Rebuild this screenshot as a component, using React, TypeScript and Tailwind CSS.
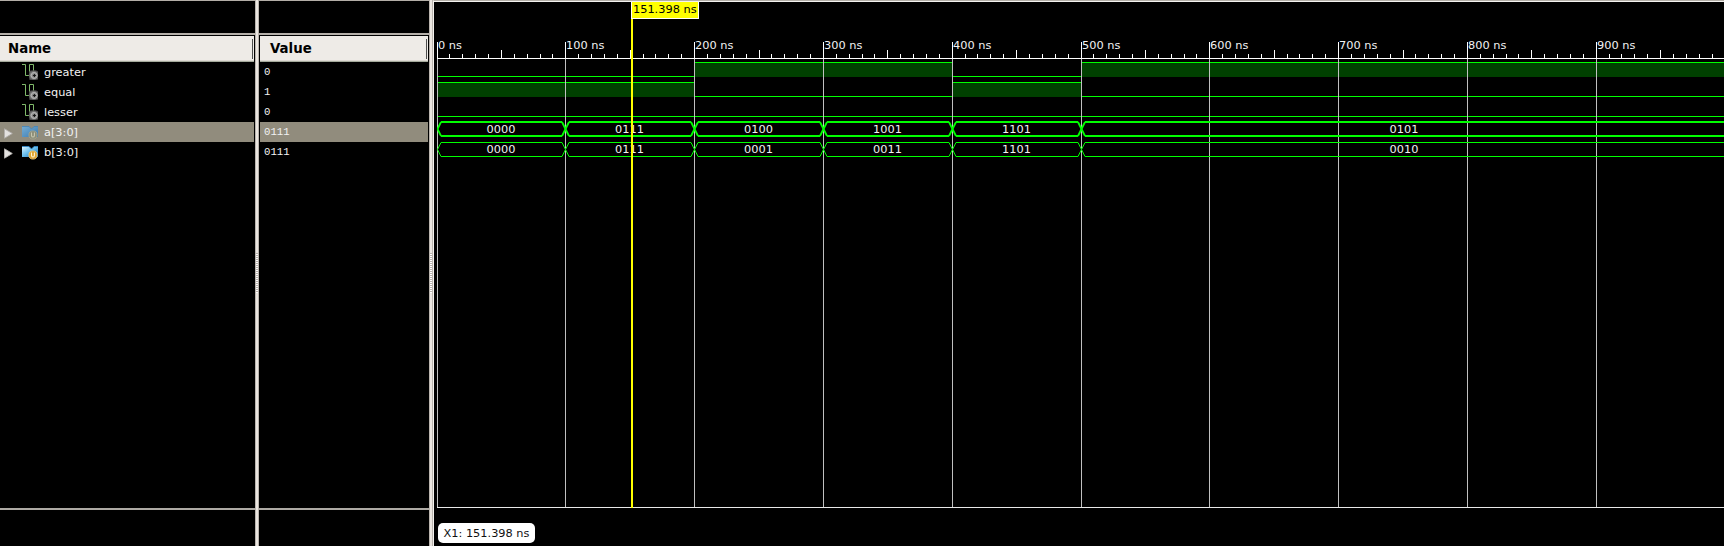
import React from "react";

const STEP = 128.8;
const PLOT_W = 1287;
const at = (ns: number) => Math.floor((ns * STEP) / 100 + 0.001);

type Span = { from: number; to: number; value: string };
type Signal = { name: string; value: string; bus: boolean; selected?: boolean; spans: Span[] };

const signals: Signal[] = [
  {
    name: "greater", value: "0", bus: false,
    spans: [
      { from: 0, to: 200, value: "0" },
      { from: 200, to: 400, value: "1" },
      { from: 400, to: 500, value: "0" },
      { from: 500, to: 1000, value: "1" },
    ],
  },
  {
    name: "equal", value: "1", bus: false,
    spans: [
      { from: 0, to: 200, value: "1" },
      { from: 200, to: 400, value: "0" },
      { from: 400, to: 500, value: "1" },
      { from: 500, to: 1000, value: "0" },
    ],
  },
  { name: "lesser", value: "0", bus: false, spans: [{ from: 0, to: 1000, value: "0" }] },
  {
    name: "a[3:0]", value: "0111", bus: true, selected: true,
    spans: [
      { from: 0, to: 100, value: "0000" },
      { from: 100, to: 200, value: "0111" },
      { from: 200, to: 300, value: "0100" },
      { from: 300, to: 400, value: "1001" },
      { from: 400, to: 500, value: "1101" },
      { from: 500, to: 1000, value: "0101" },
    ],
  },
  {
    name: "b[3:0]", value: "0111", bus: true,
    spans: [
      { from: 0, to: 100, value: "0000" },
      { from: 100, to: 200, value: "0111" },
      { from: 200, to: 300, value: "0001" },
      { from: 300, to: 400, value: "0011" },
      { from: 400, to: 500, value: "1101" },
      { from: 500, to: 1000, value: "0010" },
    ],
  },
];

function WireIcon() {
  return (
    <svg width="16" height="16" viewBox="0 0 16 16" className="shrink-0">
      <defs>
        <radialGradient id="gear">
          <stop offset="0" stopColor="#c4c4c4" />
          <stop offset="0.55" stopColor="#9a9a9a" />
          <stop offset="1" stopColor="#4a4a4a" />
        </radialGradient>
      </defs>
      <path d="M0 .5H3.5V11.5H7.5V.5H11.5V7" fill="none" stroke="#7fb96a" />
      <rect x="7" y="6.5" width="9" height="9.5" rx="2" fill="#4a4a4a" />
      <circle cx="11.7" cy="11.3" r="4.9" fill="url(#gear)" />
      <path d="M8 7.5l8 8M16 7.5l-8 8" stroke="#6e6e6e" strokeWidth="1" />
      <circle cx="12.2" cy="11.5" r="3" fill="#8e8e8e" stroke="#c4c4c4" strokeWidth=".7" />
      <path d="M12.4 10v3M10.9 11.5h3" stroke="#151515" strokeWidth="1.1" />
    </svg>
  );
}

function BusIcon({ dim }: { dim?: boolean }) {
  return (
    <svg width="16" height="16" viewBox="0 0 16 16" className="shrink-0">
      <defs>
        <linearGradient id="busLit" x1="0" y1="0" x2="1" y2="1">
          <stop offset="0" stopColor="#e2f5fd" />
          <stop offset="0.45" stopColor="#6cc0ee" />
          <stop offset="1" stopColor="#1668b0" />
        </linearGradient>
        <linearGradient id="busDim" x1="0" y1="0" x2="1" y2="1">
          <stop offset="0" stopColor="#76add3" />
          <stop offset="1" stopColor="#3a7ab0" />
        </linearGradient>
      </defs>
      <path
        d="M0 2.5H7L9.5 5 12 2.5H16V13H0Z"
        fill={dim ? "url(#busDim)" : "url(#busLit)"}
      />
      <path d="M0 2.5H7L9.5 5 12 2.5H16" fill="none" stroke={dim ? "#4b86b5" : "#3188c8"} strokeWidth=".9" />
      <circle cx="11" cy="11" r="4.1" fill={dim ? "#8b8d78" : "#dfa32c"} stroke={dim ? "#a3a490" : "#f0cd7c"} strokeWidth=".8" />
      <path d="M9.5 8.6V11.6Q9.7 13 11 13T12.4 11.6V8.6" fill="none" stroke={dim ? "#c7c6b0" : "#fff3d0"} strokeWidth="1.1" />
    </svg>
  );
}

function Expander() {
  return (
    <svg width="9" height="11" viewBox="0 0 9 11" className="mt-[3px] shrink-0">
      <path d="M.5 .8L8.3 5.5L.5 10.2Z" fill="#e4e2e0" stroke="#b3b0ad" strokeWidth=".9" />
    </svg>
  );
}

function PaneHeader({ title, inset }: { title: string; inset: string }) {
  return (
    <div className="flex h-[26px] shrink-0 items-center border-b border-[#a5aa9c] bg-[#eeebe7] shadow-[inset_0_-1px_0_#dcd8d1]">
      <span className={`grow text-[13.33px] leading-none font-bold text-black ${inset}`}>{title}</span>
      <span className="mr-px h-5 w-px bg-[#4d4d4d]" />
    </div>
  );
}

function Pane({ className, title, inset, children }: {
  className: string; title: string; inset: string; children: React.ReactNode;
}) {
  return (
    <section className={`flex shrink-0 flex-col border-t border-[#b3aea7] ${className}`}>
      <div className="h-8 shrink-0" />
      <div className="-mx-px mb-px h-[2px] shrink-0 bg-[#b5b0aa]" />
      <div className="flex grow flex-col">
        <PaneHeader title={title} inset={inset} />
        {children}
      </div>
      <div className="-mx-px h-[2px] shrink-0 bg-[#aeaaa4]" />
      <div className="h-9 shrink-0" />
    </section>
  );
}

function Grip({ className }: { className: string }) {
  return (
    <div className={`flex shrink-0 flex-col items-center justify-center border-x bg-[#ebe6e1] ${className}`}>
      {Array.from({ length: 20 }, (_, i) => (
        <div key={i} className="h-[2px] w-full shrink-0 border-b border-white bg-[#b9b2ac]" />
      ))}
    </div>
  );
}

function Cell({ x0, x1, y, thick, open }: { x0: number; x1: number; y: number; thick: boolean; open: boolean }) {
  const l = x0 + 0.5;
  const r = x1 + 0.5;
  const b = y + 14;
  const m = y + 7;
  const left = `M${l + 3.5} ${y}L${l} ${m}L${l + 3.5} ${b}`;
  const right = `M${r - 3.5} ${y}L${r} ${m}L${r - 3.5} ${b}`;
  const end = open ? x1 : x1 - 3;
  const w = thick ? 2 : 1;
  return (
    <g stroke="#00ff00" fill="none" strokeLinejoin="bevel">
      <path d={`M${x0 + 4} ${y}H${end}M${x0 + 4} ${b}H${end}`} strokeWidth={w} shapeRendering="crispEdges" />
      <path d={open ? left : left + right} strokeWidth={thick ? 1.8 : 1} />
    </g>
  );
}

function Waveform() {
  const majors = Array.from({ length: 10 }, (_, i) => i * 100);
  const ticks = Array.from({ length: 100 }, (_, i) => i * 10);
  return (
    <svg width={PLOT_W} height="506" viewBox={`0 2 ${PLOT_W} 506`} className="block" fontSize="11.33" fill="#f2f2f2">
      {signals.map((s, row) => {
        const top = 62 + row * 20;
        return s.spans.map((p) => {
          const x0 = at(p.from);
          const x1 = at(p.to);
          if (s.bus) return null;
          return p.value === "1" ? (
            <g key={s.name + p.from} shapeRendering="crispEdges">
              <rect x={x0} y={top} width={x1 - x0} height="15" fill="#004000" />
              <rect x={x0} y={top} width={x1 - x0} height="1" fill="#00ff00" />
            </g>
          ) : (
            <rect key={s.name + p.from} x={x0} y={top + 14} width={x1 - x0} height="1" fill="#00ff00" />
          );
        });
      })}
      <g shapeRendering="crispEdges">
        {majors.map((t) => (
          <rect key={t} x={at(t)} y="59" width="1" height="448" fill="#c0c0c0" />
        ))}
        {ticks.map((t) => {
          const h = t % 100 === 0 ? 16 : t % 50 === 0 ? 8 : 4;
          return <rect key={t} x={at(t)} y={58 - h} width="1" height={h} fill="#fff" />;
        })}
        <rect x="0" y="58" width={PLOT_W} height="1" fill="#fff" />
        <rect x="0" y="507" width={PLOT_W} height="1" fill="#e8e8e8" />
      </g>
      {majors.map((t) => (
        <text key={t} x={at(t) + 1} y="49">{t} ns</text>
      ))}
      {signals.map((s, row) =>
        s.bus
          ? s.spans.map((p) => {
              const x0 = at(p.from);
              const x1 = p.to === 1000 ? PLOT_W + 3 : at(p.to);
              const y = 62 + row * 20 + (s.selected ? 0 : 0.5);
              return (
                <g key={s.name + p.from}>
                  <Cell x0={x0} x1={x1} y={y} thick={!!s.selected} open={p.to === 1000} />
                  <text x={(x0 + x1) / 2} y={133 + (row - 3) * 20} textAnchor="middle">{p.value}</text>
                </g>
              );
            })
          : null
      )}
      <rect x="194" y="2" width="2" height="506" fill="#ffff00" shapeRendering="crispEdges" />
    </svg>
  );
}

export default function App() {
  return (
    <main className="flex h-[546px] w-[1724px] overflow-hidden bg-black font-['DejaVu_Sans',sans-serif] text-[11.33px] text-[#f2f2f2]">
      <Pane className="w-[255px] pr-px" title="Name" inset="pl-2">
        {signals.map((s) => (
          <div key={s.name} className={`flex h-5 items-center pl-1 ${s.selected ? "bg-[#918c7d]" : ""}`}>
            <span className="flex w-[18px] shrink-0">{s.bus && <Expander />}</span>
            {s.bus ? <BusIcon dim={s.selected} /> : <WireIcon />}
            <span className="ml-[6px] leading-5">{s.name}</span>
          </div>
        ))}
      </Pane>
      <Grip className="w-1 border-[#bab4ae]" />
      <Pane className="w-[170px] px-px" title="Value" inset="pl-[10px]">
        {signals.map((s) => (
          <div
            key={s.name}
            className={`flex h-5 items-center pl-1 font-['Liberation_Mono',monospace] text-[10.67px] ${s.selected ? "bg-[#918c7d]" : ""}`}
          >
            {s.value}
          </div>
        ))}
      </Pane>
      <Grip className="w-1 border-[#bab4ae]" />
      <section className="relative flex grow flex-col border-t border-l border-t-[#b3aea7] border-l-[#f4f2ef]">
        <div className="h-px shrink-0 bg-[#f4f2ef]" />
        <div className="pl-[3px]">
          <Waveform />
        </div>
        <div className="mt-[15px] ml-1 flex h-5 w-[97px] items-center justify-center rounded-[5px] bg-white pt-px whitespace-nowrap text-[#111]">
          X1: 151.398 ns
        </div>
        <div className="absolute top-px left-[197px] h-[17px] w-[68px] border-r border-b border-l border-white bg-[#ffff00] pl-px leading-[15px] whitespace-nowrap text-black">
          151.398 ns
        </div>
      </section>
    </main>
  );
}
